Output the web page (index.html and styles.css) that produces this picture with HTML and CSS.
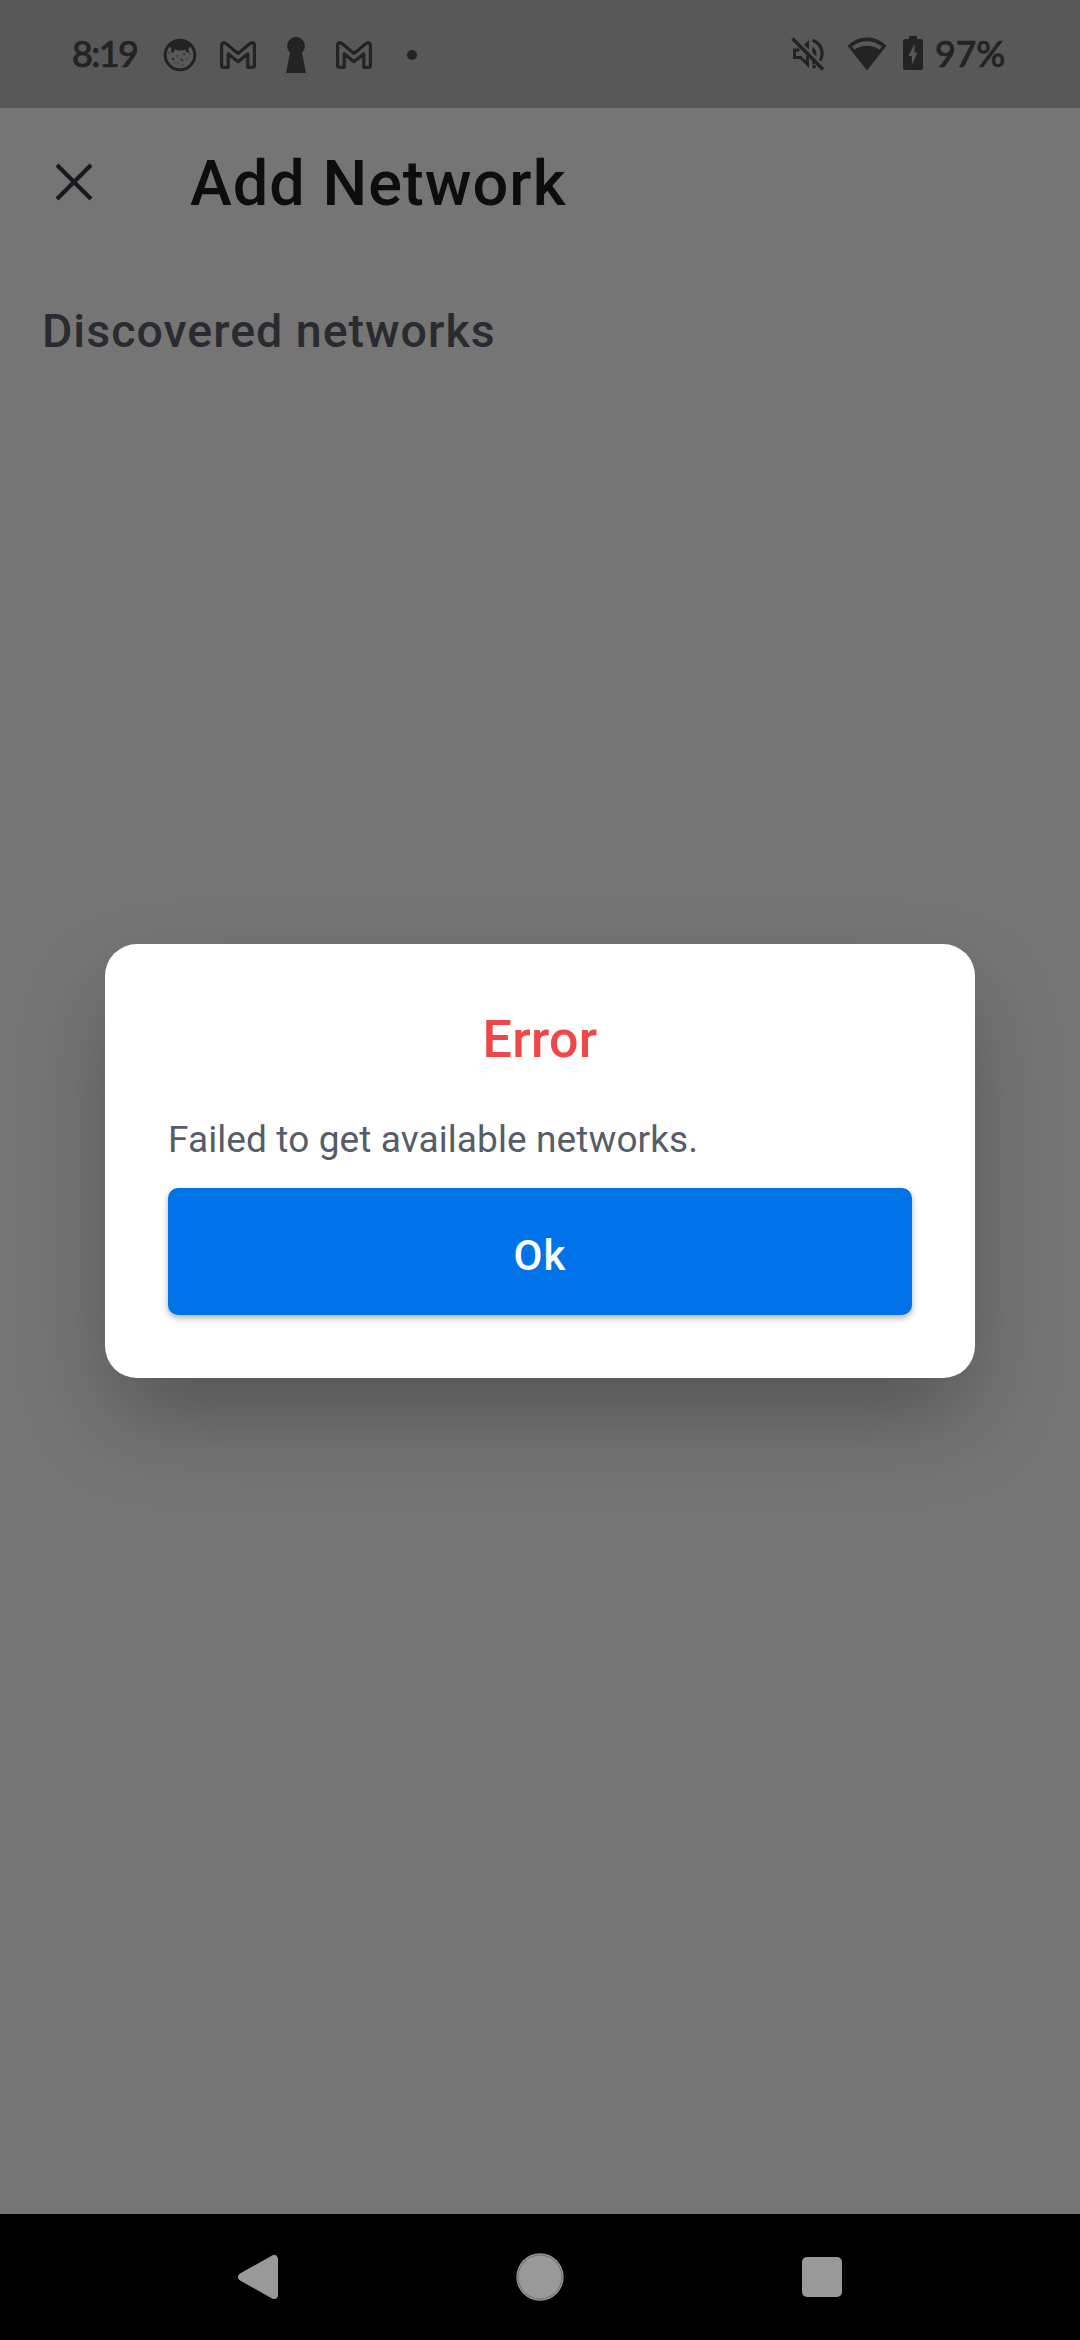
FILE: index.html
```
<!DOCTYPE html>
<html lang="en">
<head>
<meta charset="utf-8">
<title>Add Network</title>
<link rel="stylesheet" href="styles.css">
</head>
<body>
<div class="screen">
  <header class="status">
    <div class="notifications">
      <span class="clock">8:19</span>
      <svg class="icon" width="34" height="34" viewBox="0 0 34 34">
        <circle cx="17" cy="17" r="14.8" fill="none" stroke="currentColor" stroke-width="3"/>
        <path fill="currentColor" d="M5 7C10 1 24 1 29 7L25.500 10.500 26 15 23 14 22.500 11.500Q17 13.500 11.500 11.500L11 14 8 15 8.500 10.500Z"/>
        <g fill="currentColor" opacity=".75"><circle cx="10" cy="21" r="1.200"/><circle cx="21" cy="16" r="1.100"/><circle cx="19" cy="22" r="1.200"/><circle cx="24" cy="21" r=".8"/><circle cx="14" cy="18" r=".8"/><circle cx="15" cy="25" r=".8"/><circle cx="20" cy="27" r=".7"/><circle cx="12" cy="25" r=".6"/><circle cx="16" cy="21" r=".6"/><circle cx="27" cy="16" r=".8"/><circle cx="6" cy="15" r=".8"/></g>
      </svg>
      <svg class="icon mail" width="36" height="28" viewBox="0 0 36 28"><path fill="none" stroke="currentColor" stroke-width="3.200" stroke-linejoin="round" d="M1.600 4.200Q1.600 1.600 4.200 1.600L6 2.600 18 12.500 30 2.600 31.800 1.600Q34.400 1.600 34.400 4.200V24.500Q34.400 26.300 32.600 26.300H27.800V12.800L18 20.800 8.200 12.800V26.300H3.400Q1.600 26.300 1.600 24.500Z"/></svg>
      <svg class="icon keyhole" width="20" height="36" viewBox="0 0 20 36"><path fill="currentColor" d="M10 0a9 9 0 0 1 6 15.500L20 36H0L4 15.500A9 9 0 0 1 10 0Z"/></svg>
      <svg class="icon mail" width="36" height="28" viewBox="0 0 36 28"><path fill="none" stroke="currentColor" stroke-width="3.200" stroke-linejoin="round" d="M1.600 4.200Q1.600 1.600 4.200 1.600L6 2.600 18 12.500 30 2.600 31.800 1.600Q34.400 1.600 34.400 4.200V24.500Q34.400 26.300 32.600 26.300H27.800V12.800L18 20.800 8.200 12.800V26.300H3.400Q1.600 26.300 1.600 24.500Z"/></svg>
      <span class="more"></span>
    </div>
    <div class="system">
      <svg class="icon" width="34" height="34" viewBox="0 0 34 34">
        <g fill="none" stroke="currentColor">
          <path stroke-width="3" d="M8.500 13H3.500V20.500H9.500L16.500 27.500V19"/>
          <path stroke-width="3.200" d="M21.500 3.200A14 14 0 0 1 29.200 23.500M21.500 30.200A14 14 0 0 0 24.500 29"/>
          <path stroke-width="3.500" d="M1.500 1.500L32 32.500"/>
        </g>
        <path fill="currentColor" d="M18 3V12.500L13 7.800ZM21.300 9.800Q26.500 13 25.300 19.500L21.300 15.500ZM21.300 23.500L24 26.200 21.300 27.500Z"/>
      </svg>
      <svg class="icon wifi" width="40" height="34" viewBox="0 0 40 34"><path fill="currentColor" fill-rule="evenodd" d="M0.500 8.800Q9 0.600 20 .6T39.500 8.800L20 33.500ZM5 9.600L7.400 12.600Q13 8.700 20 8.700T32.600 12.600L35 9.600Q28 4.300 20 4.300T5 9.600Z"/></svg>
      <svg class="icon battery" width="20" height="34" viewBox="0 0 20 34"><path fill="currentColor" fill-rule="evenodd" d="M6 0H14V3H17.500Q20 3 20 5.500V31.500Q20 34 17.500 34H2.500Q0 34 0 31.500V5.500Q0 3 2.500 3H6ZM11.500 8L5.500 20H8.800V29L14.500 16.500H11.500Z"/></svg>
      <span class="charge">97%</span>
    </div>
  </header>

  <main class="page">
    <div class="toolbar">
      <svg class="close" width="38" height="38" viewBox="0 0 38 38"><path fill="none" stroke="currentColor" stroke-width="4.200" d="M2 2L36 36M36 2L2 36"/></svg>
      <h1 class="title">Add Network</h1>
    </div>
    <h2 class="section">Discovered networks</h2>
    <div class="overlay">
      <div class="dialog" role="alertdialog">
        <h3 class="heading">Error</h3>
        <p class="message">Failed to get available networks.</p>
        <button class="ok">Ok</button>
      </div>
    </div>
  </main>

  <nav class="navbar">
    <svg width="42" height="48" viewBox="0 0 42 48"><path fill="#999" stroke="#999" stroke-width="8" stroke-linejoin="round" d="M5 24L37 6V42Z"/></svg>
    <svg width="50" height="50" viewBox="0 0 50 50"><circle cx="25" cy="25" r="23.700" fill="#999"/><circle cx="25" cy="25" r="22" fill="none" stroke="#606060" stroke-width=".8"/></svg>
    <svg width="42" height="42" viewBox="0 0 42 42"><rect x="1" y="1" width="40" height="40" rx="5" fill="#999"/></svg>
  </nav>
</div>
</body>
</html>
```
FILE: styles.css
```
* { box-sizing: border-box; }
body { margin: 0; font-family: Roboto, sans-serif; }
h1, h2, h3, p { margin: 0; font-weight: 500; white-space: nowrap; }
svg { display: block; flex: none; }
.screen { width: 1080px; height: 2340px; display: flex; flex-direction: column; background: #757575; overflow: hidden; }

.status { height: 108px; padding: 0 75px 0 72px; display: flex; justify-content: space-between; background: #585858; color: #232323; font: 500 36px/105px Lato, sans-serif; -webkit-text-stroke: .7px currentColor; }
.notifications, .system { display: flex; align-items: center; }
.notifications { padding-top: 1px; }
.clock { width: 91px; margin-bottom: 2px; letter-spacing: -1.6px; }
.mail { margin-left: 23px; }
.keyhole { margin-left: 30px; }
.keyhole + .mail { margin-left: 30px; }
.more { width: 10px; height: 10px; margin-left: 35px; border-radius: 50%; background: currentColor; }
.wifi { margin: 0 16px 0 22px; }
.battery { margin-bottom: 2px; }
.charge { width: 70px; margin: 0 0 2px 12px; letter-spacing: -.3px; }

.page { flex: 1; position: relative; }
.toolbar { height: 148px; padding-left: 55px; display: flex; align-items: center; color: #17191d; }
.close { margin-top: -1px; }
.title { margin: 3px 0 0 97px; font-size: 63px; line-height: 80px; letter-spacing: 1px; color: #0c0d0f; }
.section { margin: 45px 0 0 42px; font-size: 46.5px; line-height: 60px; letter-spacing: 1px; color: #292b30; }

.overlay { position: absolute; inset: 0; display: grid; place-items: center; }
.dialog { width: 870px; height: 433.2px; padding: 63.700px 63px 63px; border-radius: 32px; display: flex; flex-direction: column; background: #fff; box-shadow: 0 44px 92px -8px rgba(0, 0, 0, .29); }
.heading { text-align: center; font-size: 52px; line-height: 64px; letter-spacing: .3px; color: #ef4747; }
.message { margin-top: 43px; font-size: 37px; font-weight: 400; line-height: 50px; letter-spacing: .1px; color: #565c68; }
.ok { margin-top: auto; width: 744px; height: 126.500px; padding: 9px 0 0; border: 0; border-radius: 10px; background: #0073e8; color: #fff; font: 500 42px/50px Roboto, sans-serif; letter-spacing: 1.200px; box-shadow: 0 3px 6px rgba(0, 0, 0, .32); }

.navbar { height: 126px; padding: 0 237px; display: flex; align-items: center; justify-content: space-between; background: #000; }
```
